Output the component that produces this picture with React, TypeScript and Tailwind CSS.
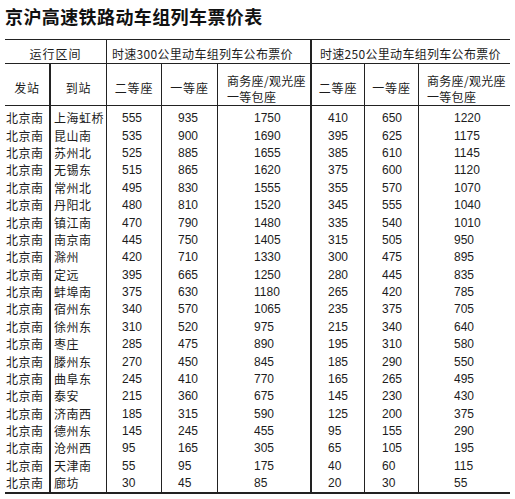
const rows: [string, number[]][] = [
  ["上海虹桥", [555, 935, 1750, 410, 650, 1220]],
  ["昆山南", [535, 900, 1690, 395, 625, 1175]],
  ["苏州北", [525, 885, 1655, 385, 610, 1145]],
  ["无锡东", [515, 865, 1620, 375, 600, 1120]],
  ["常州北", [495, 830, 1555, 355, 570, 1070]],
  ["丹阳北", [480, 810, 1520, 345, 555, 1040]],
  ["镇江南", [470, 790, 1480, 335, 540, 1010]],
  ["南京南", [445, 750, 1405, 315, 505, 950]],
  ["滁州", [420, 710, 1330, 300, 475, 895]],
  ["定远", [395, 665, 1250, 280, 445, 835]],
  ["蚌埠南", [375, 630, 1180, 265, 420, 785]],
  ["宿州东", [340, 570, 1065, 235, 375, 705]],
  ["徐州东", [310, 520, 975, 215, 340, 640]],
  ["枣庄", [285, 475, 890, 195, 310, 580]],
  ["滕州东", [270, 450, 845, 185, 290, 550]],
  ["曲阜东", [245, 410, 770, 165, 265, 495]],
  ["泰安", [215, 360, 675, 145, 230, 430]],
  ["济南西", [185, 315, 590, 125, 200, 375]],
  ["德州东", [145, 245, 455, 95, 155, 290]],
  ["沧州西", [95, 165, 305, 65, 105, 195]],
  ["天津南", [55, 95, 175, 40, 60, 115]],
  ["廊坊", [30, 45, 85, 20, 30, 55]],
];

// price columns: width, left border, text padding
const priceCols = [
  { w: "w-[55px]", b: "border-l", p: "pl-[15px]" },
  { w: "w-[56px]", b: "border-l", p: "pl-[16px]" },
  { w: "w-[93px]", b: "border-l", p: "pl-[36px]" },
  { w: "w-[54px]", b: "border-l-2", p: "pl-[16px]" },
  { w: "w-[54px]", b: "border-l", p: "pl-[17px]" },
  { w: "w-[92px]", b: "border-l", p: "pl-[35px]" },
];

const cjk = "font-['Noto_Sans_CJK_SC',sans-serif]";
const num = "font-['Liberation_Sans','Noto_Sans_CJK_SC',sans-serif]";

export default function App() {
  return (
    <div className={`min-h-[499px] w-[515px] bg-white pl-[5px] text-[#1c1c1c] ${cjk}`}>
      <div className="h-[39px] pt-[5px]">
        <h1 className="text-[18px] leading-[22px] font-bold tracking-[0.4px] text-[#111]">
          京沪高速铁路动车组列车票价表
        </h1>
      </div>

      <div className="w-[505px] border-t border-b-2 border-[#222]">
        {/* header row 1 */}
        <div className="flex h-[24px] border-b border-[#222] text-[12px] leading-none">
          <div className="flex w-[101px] items-center justify-center pt-[5px] tracking-[1px]">运行区间</div>
          <div className="flex w-[204px] items-center border-l border-[#222] pt-[5px] pl-[5px] tracking-[0.3px]">
            时速300公里动车组列车公布票价
          </div>
          <div className="flex w-[200px] items-center border-l-2 border-[#222] pt-[5px] pl-[8px] tracking-[0.3px]">
            时速250公里动车组列车公布票价
          </div>
        </div>

        {/* header row 2 */}
        <div className="flex h-[42px] border-b border-[#222] text-[12px] leading-[16px] tracking-[0.8px]">
          <div className="flex w-[44px] items-center justify-center pt-[7px]">发站</div>
          <div className="flex w-[57px] items-center justify-center border-l-2 border-[#222] pt-[7px]">到站</div>
          <div className="flex w-[55px] items-center justify-center border-l border-[#222] pt-[7px]">二等座</div>
          <div className="flex w-[56px] items-center justify-center border-l border-[#222] pt-[7px]">一等座</div>
          <div className="flex w-[93px] flex-col justify-center border-l border-[#222] pt-[8px] pl-[9px] tracking-[0.3px]">
            <span>商务座/观光座</span>
            <span>一等包座</span>
          </div>
          <div className="flex w-[54px] items-center justify-center border-l-2 border-[#222] pt-[7px]">二等座</div>
          <div className="flex w-[54px] items-center justify-center border-l border-[#222] pt-[7px]">一等座</div>
          <div className="flex w-[92px] flex-col justify-center border-l border-[#222] pt-[8px] pl-[8px] tracking-[0.3px]">
            <span>商务座/观光座</span>
            <span>一等包座</span>
          </div>
        </div>

        {/* body, laid out column by column so the rules run unbroken */}
        <div className="flex text-[12px]">
          <div className="flex w-[44px] flex-col pt-[3.6px] pl-[1px] tracking-[0.5px]">
            {rows.map(([to]) => (
              <div key={to} className="flex h-[17.38px] items-center">北京南</div>
            ))}
          </div>
          <div className="flex w-[57px] flex-col border-l-2 border-[#222] pt-[3.6px] pl-[3px] tracking-[0.5px]">
            {rows.map(([to]) => (
              <div key={to} className="flex h-[17.38px] items-center">{to}</div>
            ))}
          </div>
          {priceCols.map((c, i) => (
            <div key={i} className={`flex flex-col border-[#222] pt-[3.6px] ${c.w} ${c.b} ${c.p} ${num}`}>
              {rows.map(([to, p]) => (
                <div key={to} className="flex h-[17.38px] items-center">{p[i]}</div>
              ))}
            </div>
          ))}
        </div>
      </div>
    </div>
  );
}
